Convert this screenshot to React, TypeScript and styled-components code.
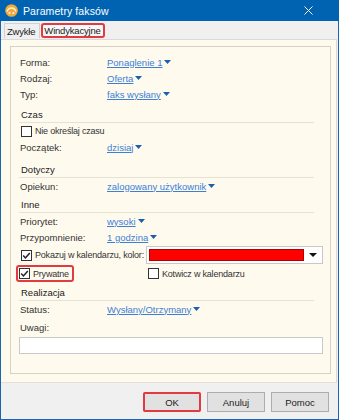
import styled, { createGlobalStyle } from 'styled-components';

const GlobalStyle = createGlobalStyle`
  html, body {
    margin: 0;
    padding: 0;
    background: #ffffff;
  }
  body {
    font-family: "Liberation Sans", Arial, sans-serif;
    font-size: 9.5px;
    color: #333333;
  }
`;

const Window = styled.div`
  width: 339px;
  height: 420px;
  box-sizing: border-box;
  border: 1px solid #1c64ae;
  border-top: none;
  display: flex;
  flex-direction: column;
  background: #f0f0f0;
`;

const TitleBar = styled.div`
  height: 21px;
  margin: 0 -1px;
  background: #0063b1;
  display: flex;
  align-items: center;
  padding: 0 0 0 5px;
  gap: 5px;
  color: #ffffff;
  font-size: 10.5px;
`;

const TitleText = styled.span`
  flex: 1;
  letter-spacing: 0.1px;
`;

const CloseIcon = styled.svg`
  width: 9px;
  height: 9px;
  margin-right: 26px;
`;

const TabStrip = styled.div`
  height: 18px;
  display: flex;
  align-items: flex-end;
  padding-left: 3px;
  gap: 1px;
`;

const Tab = styled.div<{ $marked?: boolean }>`
  height: 15px;
  box-sizing: border-box;
  display: flex;
  align-items: center;
  padding: ${({ $marked }) => ($marked ? '0 2px 0 1px' : '0 4px 0 2px')};
  white-space: nowrap;
  letter-spacing: -0.2px;
  color: #222222;
  border: ${({ $marked }) => ($marked ? '2px solid #e23a40' : '1px solid #d2d2d2')};
  border-bottom: ${({ $marked }) => ($marked ? '2px solid #e23a40' : 'none')};
  border-radius: ${({ $marked }) => ($marked ? '3px' : '0')};
  background: ${({ $marked }) => ($marked ? '#f7f7f7' : '#f0f0f0')};
  margin-bottom: 1px;
`;

const Page = styled.div`
  flex: 1;
  display: flex;
  flex-direction: column;
  background: #fffaee;
  border-top: 1px solid #dadada;
  border-right: 1px solid #dadada;
  border-bottom: 1px solid #e4e0d6;
  margin-right: 1px;
  padding: 6px 5px 8px 9px;
`;

const Panel = styled.div`
  flex: 1;
  border: 1px solid #d6d2c8;
  padding: 7px 7px 0 8px;
  display: flex;
  flex-direction: column;
`;

const Row = styled.div<{ $h?: number; $cols?: string }>`
  height: ${({ $h }) => $h ?? 16}px;
  display: grid;
  grid-template-columns: ${({ $cols }) => $cols ?? '88px 1fr'};
  align-items: center;
  white-space: nowrap;
`;

const Label = styled.span`
  padding-left: 1px;
  color: #333333;
`;

const Section = styled.div<{ $mt?: number }>`
  margin-top: ${({ $mt }) => $mt ?? 2}px;
  margin-right: 9px;
  height: 16px;
  border-bottom: 1px solid #e6e2d6;
  display: flex;
  align-items: center;
  padding-left: 2px;
  color: #222222;
`;

const Link = styled.span`
  display: inline-flex;
  align-items: center;
  gap: 2px;
  color: #3b7fd6;
  text-decoration: underline;
  text-underline-offset: 1px;
`;

const Caret = styled.svg`
  width: 7px;
  height: 4px;
`;

const Check = styled.label<{ $marked?: boolean }>`
  display: inline-flex;
  align-items: center;
  gap: 3px;
  align-self: stretch;
  justify-self: start;
  box-sizing: border-box;
  padding: ${({ $marked }) => ($marked ? '0 3px 0 1px' : '0')};
  margin-left: ${({ $marked }) => ($marked ? '-3px' : '0')};
  border: ${({ $marked }) => ($marked ? '2px solid #e23a40' : '2px solid transparent')};
  border-radius: 3px;
  color: #333333;
  font-size: 9px;
  letter-spacing: -0.2px;
`;

const Box = styled.span`
  width: 11px;
  height: 11px;
  box-sizing: border-box;
  border: 1px solid #333333;
  background: #ffffff;
  display: flex;
  align-items: center;
  justify-content: center;
`;

const Combo = styled.div`
  height: 18px;
  box-sizing: border-box;
  border: 1px solid #c8c8c8;
  background: #ffffff;
  display: flex;
  align-items: center;
  padding: 2px;
  gap: 5px;
`;

const Swatch = styled.div`
  flex: 1;
  align-self: stretch;
  background: #ff0000;
  border: 1px solid #b00000;
`;

const ComboArrow = styled.svg`
  width: 8px;
  height: 4px;
  margin-right: 3px;
`;

const Notes = styled.div`
  margin-top: 2px;
  height: 17px;
  box-sizing: border-box;
  border: 1px solid #c9c9c9;
  background: #ffffff;
`;

const Footer = styled.div`
  height: 36px;
  display: flex;
  align-items: center;
  justify-content: flex-end;
  gap: 6px;
  padding-right: 9px;
`;

const Button = styled.button<{ $marked?: boolean }>`
  width: 58px;
  height: 20px;
  box-sizing: border-box;
  font: inherit;
  color: #222222;
  background: #e1e1e1;
  border: 1px solid #adadad;
  outline: ${({ $marked }) => ($marked ? '2px solid #e23a40' : 'none')};
  outline-offset: -2px;
  border-radius: ${({ $marked }) => ($marked ? '2px' : '0')};
  padding: 0;
  margin-top: 2px;
`;

const Dropdown = ({ text }: { text: string }) => (
  <Link>
    {text}
    <Caret viewBox="0 0 7 4">
      <path d="M0 0h7L3.5 4z" fill="#1b5fae" />
    </Caret>
  </Link>
);

const Tick = () => (
  <svg width="9" height="9" viewBox="0 0 9 9">
    <path d="M1.2 4.6l2.2 2.3 4.4-5" fill="none" stroke="#222" strokeWidth="1.5" />
  </svg>
);

const AppIcon = () => (
  <svg width="13" height="13" viewBox="0 0 13 13">
    <circle cx="6.5" cy="6.5" r="6.3" fill="#f2a93b" />
    <path d="M2 7.5c1-2.5 3-3.5 4.5-3.5s3.5 1 4.5 3.5" fill="none" stroke="#fff4d8" strokeWidth="1.3" />
    <circle cx="4.5" cy="9" r="1.1" fill="#fff4d8" />
    <circle cx="8.5" cy="9" r="1.1" fill="#fff4d8" />
  </svg>
);

export default function App() {
  return (
    <>
      <GlobalStyle />
      <Window>
        <TitleBar>
          <AppIcon />
          <TitleText>Parametry faksów</TitleText>
          <CloseIcon viewBox="0 0 9 9">
            <path d="M0.5 0.5l8 8M8.5 0.5l-8 8" stroke="#ffffff" strokeWidth="1" />
          </CloseIcon>
        </TitleBar>
        <TabStrip>
          <Tab>Zwykłe</Tab>
          <Tab $marked>Windykacyjne</Tab>
        </TabStrip>
        <Page>
          <Panel>
            <Row>
              <Label>Forma:</Label>
              <Dropdown text="Ponaglenie 1" />
            </Row>
            <Row>
              <Label>Rodzaj:</Label>
              <Dropdown text="Oferta" />
            </Row>
            <Row>
              <Label>Typ:</Label>
              <Dropdown text="faks wysłany" />
            </Row>

            <Section $mt={4}>Czas</Section>
            <Row $cols="1fr">
              <Check>
                <Box />
                Nie określaj czasu
              </Check>
            </Row>
            <Row>
              <Label>Początek:</Label>
              <Dropdown text="dzisiaj" />
            </Row>

            <Section $mt={6}>Dotyczy</Section>
            <Row>
              <Label>Opiekun:</Label>
              <Dropdown text="zalogowany użytkownik" />
            </Row>

            <Section>Inne</Section>
            <Row>
              <Label>Priorytet:</Label>
              <Dropdown text="wysoki" />
            </Row>
            <Row>
              <Label>Przypomnienie:</Label>
              <Dropdown text="1 godzina" />
            </Row>
            <Row $h={20} $cols="127px 1fr">
              <Check>
                <Box>
                  <Tick />
                </Box>
                Pokazuj w kalendarzu, kolor:
              </Check>
              <Combo>
                <Swatch />
                <ComboArrow viewBox="0 0 8 4">
                  <path d="M0 0h8L4 4z" fill="#111111" />
                </ComboArrow>
              </Combo>
            </Row>
            <Row $h={17} $cols="127px 1fr">
              <Check $marked>
                <Box>
                  <Tick />
                </Box>
                Prywatne
              </Check>
              <Check>
                <Box />
                Kotwicz w kalendarzu
              </Check>
            </Row>

            <Section>Realizacja</Section>
            <Row>
              <Label>Status:</Label>
              <Dropdown text="Wysłany/Otrzymany" />
            </Row>
            <Row style={{ marginTop: 2 }}>
              <Label>Uwagi:</Label>
            </Row>
            <Notes />
          </Panel>
        </Page>
        <Footer>
          <Button $marked>OK</Button>
          <Button>Anuluj</Button>
          <Button>Pomoc</Button>
        </Footer>
      </Window>
    </>
  );
}
